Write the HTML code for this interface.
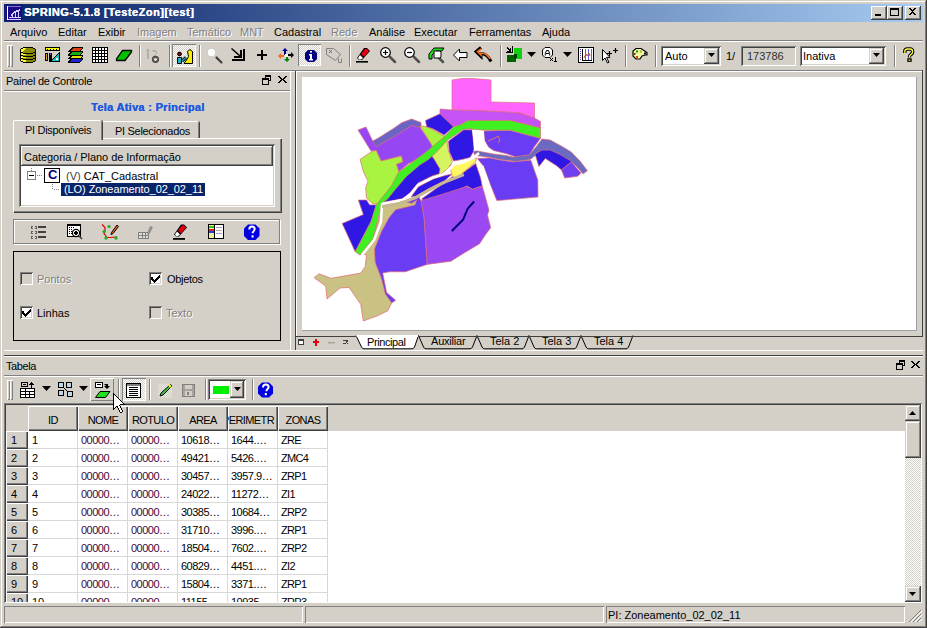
<!DOCTYPE html>
<html><head><meta charset="utf-8">
<style>
*{margin:0;padding:0;box-sizing:border-box}
html,body{width:927px;height:628px;overflow:hidden;background:#d4d0c8;font-family:"Liberation Sans",sans-serif;font-size:11px;color:#000}
.a{position:absolute}
svg{display:block}
.t{position:absolute;white-space:pre;line-height:13px}
.hl{position:absolute;height:1px}
.vl{position:absolute;width:1px}
.dis{color:#808080;text-shadow:1px 1px 0 #fff}
.btn{position:absolute;background:#d4d0c8;box-shadow:inset -1px -1px #404040,inset 1px 1px #fff,inset -2px -2px #808080}
.chk{background:#fff;background-image:conic-gradient(#d4d0c8 25%,#fff 0 50%,#d4d0c8 0 75%,#fff 0);background-size:2px 2px;box-shadow:inset 1px 1px #808080,inset -1px -1px #fff}
.cb{width:13px;height:13px;box-shadow:inset 1px 1px #808080,inset -1px -1px #fff,inset 2px 2px #404040,inset -2px -2px #d4d0c8}
.sunk{position:absolute;box-shadow:inset 1px 1px #808080,inset -1px -1px #fff,inset 2px 2px #404040,inset -2px -2px #d4d0c8}
</style></head><body>
<!-- window frame -->
<div class="hl" style="left:0;top:1px;width:926px;background:#fff"></div>
<div class="vl" style="left:1px;top:1px;height:626px;background:#fff"></div>
<div class="vl" style="left:925px;top:1px;height:626px;background:#808080"></div>
<div class="vl" style="left:926px;top:0;height:628px;background:#404040"></div>
<div class="hl" style="left:1px;top:626px;width:925px;background:#808080"></div>
<div class="hl" style="left:0;top:627px;width:927px;background:#404040"></div>

<!-- title bar -->
<div class="a" style="left:4px;top:4px;width:919px;height:18px;background:linear-gradient(to right,#0a246a,#a6caf0)"></div>
<div class="t" style="left:24px;top:6px;color:#fff;font-weight:bold;font-size:11px;letter-spacing:0.5px;text-shadow:0.4px 0 #fff">SPRING-5.1.8 [TesteZon][test]</div>
<div class="btn" style="left:871px;top:6px;width:16px;height:14px"></div>
<div class="btn" style="left:887px;top:6px;width:16px;height:14px"></div>
<div class="btn" style="left:905px;top:6px;width:16px;height:14px"></div>
<svg class="a" style="left:0;top:0" width="927" height="22" shape-rendering="crispEdges">
<rect x="875" y="14" width="6" height="2" fill="#000"/>
<path d="M890 8h9v8h-9zM891 10v5h7v-5z" fill="#000"/>
<path d="M909 8h2v1h1v1h1v-1h1v-1h2v1h-1v1h-1v1h-1v1h1v1h1v1h1v1h-2v-1h-1v-1h-1v1h-1v1h-2v-1h1v-1h1v-1h1v-1h-1v-1h-1v-1h-1z" fill="#000"/>
<!-- app icon -->
<rect x="6" y="5" width="16" height="16" fill="#1a0a8a"/>
<rect x="7" y="6" width="1" height="14" fill="#fff"/><rect x="7" y="6" width="14" height="1" fill="#e0e0ff" opacity="0.5"/>
<path d="M10 15l5-4 5-2v2l-5 2-4 3z M9 17h12v1H9z M8 19h13v1H8z M12 13h1v4h-1zM15 12h1v5h-1zM18 11h1v6h-1z" fill="#d8d0ff"/>
</svg>

<!-- menu -->
<div class="t" style="left:10px;top:26px">Arquivo</div>
<div class="t" style="left:58px;top:26px">Editar</div>
<div class="t" style="left:98px;top:26px">Exibir</div>
<div class="t dis" style="left:137px;top:26px">Imagem</div>
<div class="t dis" style="left:187px;top:26px">Temático</div>
<div class="t dis" style="left:240px;top:26px">MNT</div>
<div class="t" style="left:274px;top:26px">Cadastral</div>
<div class="t dis" style="left:331px;top:26px">Rede</div>
<div class="t" style="left:369px;top:26px">Análise</div>
<div class="t" style="left:414px;top:26px">Executar</div>
<div class="t" style="left:469px;top:26px">Ferramentas</div>
<div class="t" style="left:542px;top:26px">Ajuda</div>
<div class="hl" style="left:4px;top:40px;width:919px;background:#808080"></div>
<div class="hl" style="left:4px;top:41px;width:919px;background:#fff"></div>


<!-- toolbar -->
<div class="a" style="left:7px;top:45px;width:3px;height:22px;box-shadow:inset 1px 1px #fff,inset -1px -1px #808080"></div>
<div class="a" style="left:10px;top:45px;width:3px;height:22px;box-shadow:inset 1px 1px #fff,inset -1px -1px #808080"></div>
<div class="a chk" style="left:172px;top:44px;width:24px;height:23px"></div>
<div class="a chk" style="left:298px;top:44px;width:23px;height:22px"></div>
<svg class="a" style="left:0;top:0" width="927" height="72" shape-rendering="crispEdges">
<g fill="#808080">
<rect x="139" y="45" width="1" height="22"/><rect x="169" y="45" width="1" height="22"/><rect x="199" y="45" width="1" height="22"/>
<rect x="349" y="45" width="1" height="22"/><rect x="500" y="45" width="1" height="22"/><rect x="625" y="45" width="1" height="22"/>
<rect x="655" y="45" width="1" height="22"/><rect x="894" y="45" width="1" height="22"/>
</g>
<g fill="#fff">
<rect x="140" y="45" width="1" height="22"/><rect x="170" y="45" width="1" height="22"/><rect x="200" y="45" width="1" height="22"/>
<rect x="350" y="45" width="1" height="22"/><rect x="501" y="45" width="1" height="22"/><rect x="626" y="45" width="1" height="22"/>
<rect x="656" y="45" width="1" height="22"/><rect x="895" y="45" width="1" height="22"/>
</g>
<!-- database -->
<g transform="translate(20,47)">
<path d="M3 0h10v1h2v1h1v12h-1v1h-2v1H3v-1H1v-1H0V2h1V1h2z" fill="#000"/>
<path d="M3 1h10v1h2v12h-2v1H3v-1H1V2h2z" fill="#8a8a00"/>
<path d="M3 1h3v1H5v1H4v1H3v1H2v1H1V2h2z M1 6h5v2H1z M1 9h5v2H1z M1 12h5v2H1z M3 14h3v1H3z" fill="#ffff30"/><path d="M1 6h2v1H1zM1 9h2v1H1zM1 12h2v1H1z" fill="#e8e820"/>
<path d="M1 5h2v1h10v-1h2v1h-2v1H3V6H1z M1 8h2v1h10v-1h2v1h-2v1H3V9H1z M1 11h2v1h10v-1h2v1h-2v1H3v-1H1z" fill="#000"/>
</g>
<!-- ruler/triangle -->
<g transform="translate(45,47)">
<rect x="0" y="0" width="15" height="4" fill="#000"/><rect x="1" y="1" width="13" height="2" fill="#ffff00"/>
<path d="M2 2h1v1H2zM5 2h1v1H5zM8 2h1v1H8zM11 2h1v1h-1z" fill="#000"/>
<rect x="0" y="6" width="3" height="8" fill="#000"/><rect x="1" y="7" width="1" height="6" fill="#e0a040"/>
<rect x="4" y="6" width="3" height="9" fill="#000"/><rect x="5" y="6" width="1" height="2" fill="#6040a0"/>
<path d="M15 4v11H5z" fill="#000"/><path d="M14 6v8H7z" fill="#20c0c0"/><rect x="11" y="11" width="2" height="2" fill="#fff"/>
</g>
<!-- layers -->
<g transform="translate(68,47)">
<path d="M4 0h11v1l-3 4H0v-1z" fill="#000"/><path d="M5 1h9l-2 3H2z" fill="#e04010"/>
<path d="M3 4h12v1l-3 4H0v-1z" fill="#000"/><path d="M4 5h10l-2 3H2z" fill="#10b010"/>
<path d="M3 8h12v1l-3 3H0v-1z" fill="#000"/><path d="M4 9h10l-2 2H2z" fill="#e0e000"/>
<path d="M3 11h12v1l-3 4H0v-1z" fill="#000"/><path d="M4 12h10l-2 3H2z" fill="#2020d0"/>
</g>
<!-- grid -->
<g transform="translate(92,47)">
<rect width="16" height="16" fill="#000"/>
<path d="M1 1h2v2H1zM4 1h2v2H4zM7 1h2v2H7zM10 1h2v2h-2zM13 1h2v2h-2zM1 4h2v2H1zM4 4h2v2H4zM7 4h2v2H7zM10 4h2v2h-2zM13 4h2v2h-2zM1 7h2v2H1zM4 7h2v2H4zM7 7h2v2H7zM10 7h2v2h-2zM13 7h2v2h-2zM1 10h2v2H1zM4 10h2v2H4zM7 10h2v2H7zM10 10h2v2h-2zM13 10h2v2h-2zM1 13h2v2H1zM4 13h2v2H4zM7 13h2v2H7zM10 13h2v2h-2zM13 13h2v2h-2z" fill="#fff"/>
</g>
<!-- parallelogram -->
<path d="M122.5 50.5h9v1.5l-6.5 8.5h-8.5v-1.5z" fill="#00c000" stroke="#000" stroke-width="1.3" shape-rendering="geometricPrecision"/>
<!-- disabled 12 -->
<g fill="#b4b0a8">
<rect x="147" y="49" width="2" height="10"/><rect x="146" y="50" width="1" height="1"/>
<path d="M152 50h4v1h1v3h-1v1h-1v1h-1v1h-1v1h4v1h-5v-2h1v-1h1v-1h1v-1h1v-2h-3z"/>
</g>
<circle cx="155.5" cy="59.3" r="2.6" fill="none" stroke="#504c48" stroke-width="2" shape-rendering="geometricPrecision"/>
<path d="M154 58.5l1.5 2 1.5-2" fill="none" stroke="#fff" stroke-width="1" shape-rendering="geometricPrecision"/>
<!-- person/wall -->
<g shape-rendering="geometricPrecision" stroke="#000" stroke-width="1">
<path d="M187.5 51.5l2.5-2 2.5 2v12h-8.5l2.5-3.5 2-3.5z" fill="#f8f000"/>
<path d="M182 61l4-3.5" stroke="#000" stroke-width="3"/>
<path d="M182 61l4-3.5" stroke="#20b0c8" stroke-width="1.3"/>
<path d="M177.5 57.5h4v6h-4z" fill="#20b0c8"/>
<circle cx="179.5" cy="54" r="1.9" fill="#900000"/>
</g>
<!-- magnifier -->
<g shape-rendering="geometricPrecision">
<circle cx="211.5" cy="52.5" r="4.3" fill="#fff" stroke="#c8c8c8" stroke-width="1"/>
<path d="M216.5 57.5l5 5" stroke="#404040" stroke-width="2.2" stroke-linecap="round"/>
</g>
<!-- bottom-right arrow -->
<g fill="#000">
<path d="M232 48l8 7v-5h2v8h-8v-2h5l-8-7z" shape-rendering="geometricPrecision"/>
<rect x="243" y="49" width="2" height="12"/><rect x="232" y="59" width="13" height="2"/>
</g>
<!-- plus -->
<rect x="261" y="50" width="2" height="10" fill="#000"/><rect x="257" y="54" width="10" height="2" fill="#000"/>
<!-- move arrows -->
<g shape-rendering="geometricPrecision">
<path d="M285 48l3 3h-2v4h-2v-4h-2z" fill="#000080"/>
<path d="M294 55l-3 3v-2h-3v-2h3v-2z" fill="#000"/>
<path d="M287 62l-3-3h2v-3h2v3h2z" fill="#008000"/>
<path d="M278 56l3-3v2h3v2h-3v2z" fill="#f07020"/>
<rect x="285" y="54" width="3" height="3" fill="#fff"/>
</g>
<!-- info -->
<g shape-rendering="geometricPrecision">
<path d="M308 50h6l3 3v6l-3 3h-6l-3-3v-6z" fill="#000080"/>
<rect x="310" y="51" width="2" height="1.6" fill="#fff"/>
<path d="M309 54h3v5h1v1.5h-4V59h1v-3.5h-1z" fill="#fff"/>
</g>
<!-- disabled tag -->
<g shape-rendering="geometricPrecision" fill="none" stroke="#808080" stroke-width="1">
<path d="M326.5 48.5h7l7 6-5 6-9-6z"/><path d="M338.5 58.5v4h3v-4"/>
<path d="M329 50l3 3M332 50l-3 3" stroke="#707070"/>
</g>
<!-- eraser -->
<g shape-rendering="geometricPrecision">
<path d="M364 48l3 0 3 3-8 9h-3l-2-2z" fill="#000"/>
<path d="M365 49h2l2 2-5 6-3-3z" fill="#e00010"/>
<path d="M360 55l3 3-2 1.5h-2l-1-1.5z" fill="#fff"/>
<rect x="356" y="61" width="12" height="1.6" fill="#000"/>
</g>
<!-- zoom+ -->
<g shape-rendering="geometricPrecision">
<path d="M390 57l5 5" stroke="#505050" stroke-width="2.5" stroke-linecap="round"/>
<circle cx="385.5" cy="52.5" r="4.8" fill="#fff" stroke="#000" stroke-width="1.2"/>
<path d="M383 52.5h5M385.5 50v5" stroke="#000" stroke-width="1.2"/>
</g>
<!-- zoom- -->
<g shape-rendering="geometricPrecision">
<path d="M414 57l5 5" stroke="#505050" stroke-width="2.5" stroke-linecap="round"/>
<circle cx="409.5" cy="52.5" r="4.8" fill="#fff" stroke="#000" stroke-width="1.2"/>
<path d="M407 52.5h5" stroke="#000" stroke-width="1.2"/>
</g>
<!-- green zoom -->
<g shape-rendering="geometricPrecision">
<path d="M434 48h10l-2 3h-6l-4 4v4h-3v-5z" fill="#20e020" stroke="#000" stroke-width="1"/>
<path d="M439 58l4 4" stroke="#505050" stroke-width="2.5" stroke-linecap="round"/>
<path d="M434 51h6l1 1v5l-1 1h-6z" fill="#fff" stroke="#000" stroke-width="1"/>
</g>
<!-- left arrow -->
<path d="M453.5 55l6-6v3.5h7.5v5h-7.5v3.5z" fill="#fff" stroke="#000" stroke-width="1" shape-rendering="geometricPrecision"/>
<!-- undo -->
<g shape-rendering="geometricPrecision">
<path d="M481 47.5l-5 4 5 5v-3c4 0 7 2 10 8" fill="none" stroke="#000" stroke-width="3"/>
<path d="M481 49l-3.5 2.5 3.5 3.5v-2c4 0 7 2 9 6" fill="none" stroke="#f07020" stroke-width="1.6"/>
</g>
<!-- green squares -->
<g>
<rect x="514" y="48" width="8" height="11" fill="#10d010"/>
<rect x="507" y="55" width="9" height="7" fill="#006000"/>
<rect x="514" y="54" width="3" height="4" fill="#004000"/>
<path d="M507 47l3 3v-2h1v4h-4v-1h2l-3-3z M506 52h6v-6h1v7h-7z" fill="#000"/>
</g>
<path d="M527 52h9l-4.5 5z" fill="#000" shape-rendering="geometricPrecision"/>
<!-- A x1 -->
<g shape-rendering="geometricPrecision">
<path d="M545 47.5h5l2.5 2.5v5l-2.5 2.5h-5l-2.5-2.5v-5z" fill="#fff" stroke="#000" stroke-width="1"/>
<path d="M545.3 55.5v-2l1.2-3h2l1.2 3v2M546 53.5h3" fill="none" stroke="#000" stroke-width="1"/>
</g>
<g shape-rendering="crispEdges" fill="#000">
<path d="M550 58h1v1h1v-1h1v1h-1v1h1v1h-1v-1h-1v1h-1v-1h1v-1h-1z"/>
<path d="M555 57h1v4h1v1h-3v-1h1v-3h-1z"/>
</g>
<path d="M563 52h9l-4.5 5z" fill="#000" shape-rendering="geometricPrecision"/>
<!-- chart -->
<g>
<rect x="578" y="47" width="16" height="16" fill="#000"/><rect x="579" y="48" width="14" height="14" fill="#fff"/>
<rect x="582" y="49" width="1" height="12" fill="#000"/><rect x="582" y="60" width="10" height="1" fill="#000"/>
<path d="M580 49h1v1h-1zM580 51h1v1h-1zM580 53h1v1h-1zM580 55h1v1h-1zM580 57h1v1h-1zM580 59h1v1h-1z" fill="#6040c0"/>
<rect x="585" y="49" width="1" height="11" fill="#6060e0"/><rect x="588" y="49" width="1" height="11" fill="#6060e0"/><rect x="591" y="49" width="1" height="11" fill="#6060e0"/>
<path d="M584 58l2-4 1 2 2-3 1 3" fill="none" stroke="#c05030" stroke-width="1" shape-rendering="geometricPrecision"/>
</g>
<!-- cursor plus -->
<g shape-rendering="geometricPrecision">
<path d="M602.5 49.5v11l2.5-2.5 2.5 5 1.5-.8-2.5-4.8h3.5z" fill="#fff" stroke="#000" stroke-width="1"/>
<path d="M607 53.5h5M609.5 51v5M613 50.5h5M615.5 48v5" stroke="#000" stroke-width="1.2"/>
</g>
<!-- palette -->
<g shape-rendering="geometricPrecision">
<path d="M636 48.5h5l3 2 3 2v2.5h-2l-3 1-2 3h-4l-3-3v-5z" fill="#f0f8a0" stroke="#000" stroke-width="1.2"/>
<rect x="636" y="50.5" width="2" height="2" fill="#00a000"/><rect x="640" y="50.5" width="2" height="2" fill="#b0b020"/>
<rect x="633.5" y="53" width="2" height="2" fill="#803000"/><rect x="636" y="56" width="2" height="2" fill="#e04000"/>
<rect x="644" y="52.5" width="2" height="2" fill="#000040"/>
</g>
<!-- help -->
<g shape-rendering="geometricPrecision" fill="none" stroke-linejoin="round">
<path d="M904.8,53 V51.5 Q904.8,49 907.5,49 H910 Q912.6,49 912.6,51.8 Q912.6,53.8 910.5,54.8 Q909.5,55.3 909.5,57 V57.5" stroke="#000" stroke-width="3.4"/>
<rect x="907.3" y="58.3" width="4.4" height="3.6" fill="#000" stroke="none"/>
<path d="M904.8,53 V51.5 Q904.8,49 907.5,49 H910 Q912.6,49 912.6,51.8 Q912.6,53.8 910.5,54.8 Q909.5,55.3 909.5,57 V57.5" stroke="#ffff40" stroke-width="1.3"/>
<rect x="908.6" y="59.6" width="1.8" height="1.2" fill="#ffff40" stroke="none"/>
</g>
</svg>
<!-- combos -->
<div class="sunk" style="left:661px;top:46px;width:60px;height:20px;background:#fff"></div>
<div class="btn" style="left:704px;top:48px;width:15px;height:16px;box-shadow:inset -1px -1px #404040,inset 1px 1px #d4d0c8,inset -2px -2px #808080,inset 2px 2px #fff"></div>
<svg class="a" style="left:708px;top:53px" width="8" height="5"><path d="M0 0h7l-3.5 4z" fill="#000"/></svg>
<div class="t" style="left:665px;top:50px">Auto</div>
<div class="t" style="left:726px;top:50px">1/</div>
<div class="sunk" style="left:741px;top:46px;width:55px;height:20px;background:#d4d0c8"></div>
<div class="t" style="left:747px;top:50px;color:#303030">173786</div>
<div class="sunk" style="left:800px;top:46px;width:86px;height:20px;background:#fff"></div>
<div class="btn" style="left:869px;top:48px;width:15px;height:16px;box-shadow:inset -1px -1px #404040,inset 1px 1px #d4d0c8,inset -2px -2px #808080,inset 2px 2px #fff"></div>
<svg class="a" style="left:873px;top:53px" width="8" height="5"><path d="M0 0h7l-3.5 4z" fill="#000"/></svg>
<div class="t" style="left:803px;top:50px">Inativa</div>

<!-- toolbar bottom -->
<div class="hl" style="left:4px;top:70px;width:919px;background:#808080"></div>
<div class="hl" style="left:4px;top:71px;width:919px;background:#fff"></div>

<!-- left dock -->
<div class="t" style="left:6px;top:75px;letter-spacing:-0.25px">Painel de Controle</div>
<div class="hl" style="left:4px;top:90px;width:287px;background:#808080"></div>
<div class="hl" style="left:4px;top:91px;width:287px;background:#fff"></div>
<div class="vl" style="left:290px;top:71px;height:279px;background:#fff"></div>


<div class="a" style="left:278px;top:76px;width:9px;height:8px"><svg width="9" height="8" shape-rendering="crispEdges"><path d="M0 0h2v1h1v1h1v1h1v-1h1v-1h1v-1h2v1h-1v1h-1v1h-1v1h1v1h1v1h1v1h-2v-1h-1v-1h-1v-1h-1v1h-1v1h-1v1H0v-1h1v-1h1v-1h1v-1H2v-1H1V1H0z" fill="#000"/></svg></div>
<svg class="a" style="left:262px;top:75px" width="10" height="10" shape-rendering="crispEdges"><path d="M3 0h6v6H7v-1h1V2H4v1H3z" fill="#000"/><path d="M0 3h7v7H0z M1 5v4h5V5z" fill="#000"/></svg>
<div class="t" style="left:91px;top:101px;color:#2058e0;font-weight:bold;letter-spacing:0.3px;text-shadow:0.3px 0 #2058e0">Tela Ativa : Principal</div>
<!-- tabs -->
<div class="a" style="left:102px;top:121px;width:97px;height:17px;border-top:1px solid #fff;border-left:1px solid #fff;border-radius:2px 2px 0 0;box-shadow:inset -1px 0 #808080,1px 0 #404040"></div>
<div class="t" style="left:115px;top:125px;letter-spacing:-0.3px">PI Selecionados</div>
<div class="a" style="left:13px;top:138px;width:268px;height:74px;border-top:1px solid #fff;border-left:1px solid #fff;box-shadow:inset -1px -1px #808080,1px 1px #404040"></div>
<div class="a" style="left:13px;top:120px;width:89px;height:20px;background:#d4d0c8;border-top:1px solid #fff;border-left:1px solid #fff;border-radius:2px 2px 0 0;box-shadow:inset -1px 0 #808080,1px 0 #404040"></div>
<div class="t" style="left:25px;top:124px;letter-spacing:-0.3px">PI Disponíveis</div>
<!-- listview -->
<div class="sunk" style="left:19px;top:144px;width:256px;height:63px;background:#fff"></div>
<div class="btn" style="left:21px;top:146px;width:252px;height:20px"></div>
<div class="t" style="left:24px;top:151px;letter-spacing:-0.05px">Categoria / Plano de Informação</div>
<svg class="a" style="left:26px;top:167px" width="40" height="30" shape-rendering="crispEdges">
<rect x="1" y="4" width="9" height="9" fill="#808080"/><rect x="2" y="5" width="7" height="7" fill="#fff"/><rect x="3" y="8" width="5" height="1" fill="#000"/>
<path d="M5 1h1v1H5zM5 3h1v1H5zM11 8h1v1h-1zM13 8h1v1h-1zM15 8h1v1h-1z" fill="#808080"/>
<path d="M26 17h1v1h-1zM26 19h1v1h-1zM26 21h1v1h-1zM28 22h1v1h-1zM30 22h1v1h-1zM32 22h1v1h-1z" fill="#808080"/>
<rect x="18" y="1" width="16" height="15" fill="#000"/><rect x="19" y="2" width="14" height="13" fill="#fff"/>
</svg>
<div class="t" style="left:48px;top:168px;font-weight:bold;color:#000080;font-size:13px">C</div>
<div class="t" style="left:66px;top:170px;color:#000"><span style="color:#404040">(V)</span> CAT_Cadastral</div>
<div class="a" style="left:61px;top:183px;width:144px;height:13px;background:#0a246a"></div>
<div class="t" style="left:64px;top:183px;color:#fff;letter-spacing:-0.08px">(LO) Zoneamento_02_02_11</div>
<!-- tool strip -->
<div class="a" style="left:13px;top:219px;width:267px;height:25px;border:1px solid #808080;box-shadow:inset 1px 1px #fff,1px 1px #fff"></div>
<svg class="a" style="left:0;top:218px" width="290" height="26" shape-rendering="crispEdges">
<!-- list -->
<g fill="#606060"><path d="M31 8h2v1h-1v1h1v1h-2zM35 8h2v3h-2v-1h1V9h-1zM31 13h2v1h-1v1h1v1h-2zM35 13h2v3h-2v-1h1v-1h-1zM31 18h2v1h-1v1h1v1h-2zM35 18h2v3h-2v-1h1v-1h-1z"/></g>
<g fill="#404040"><rect x="38" y="8" width="8" height="2"/><rect x="38" y="13" width="8" height="2"/><rect x="38" y="18" width="8" height="2"/></g>
<!-- table zoom -->
<g>
<rect x="67" y="6" width="14" height="13" fill="#000"/><rect x="68" y="8" width="12" height="10" fill="#fff"/>
<path d="M69 9h1v1h-1zM71 9h1v1h-1zM73 9h1v1h-1zM69 11h1v1h-1zM71 11h1v1h-1zM69 13h1v1h-1zM71 13h1v1h-1zM69 15h1v1h-1zM71 15h1v1h-1z" fill="#000"/>
<circle cx="76" cy="15" r="3.6" fill="#fff" stroke="#000" stroke-width="1.2" shape-rendering="geometricPrecision"/>
<path d="M74 15h4M76 13v4" stroke="#000" stroke-width="1.2"/>
<path d="M79 18l3 3" stroke="#404040" stroke-width="1.6" shape-rendering="geometricPrecision"/>
</g>
<!-- edit vector -->
<g shape-rendering="geometricPrecision">
<path d="M102 6.5l3 3 0 4 -1 2 3 4 3 0 7-.5" fill="none" stroke="#e00000" stroke-width="1.2"/>
<circle cx="109" cy="8.5" r="1.6" fill="#20b020"/><circle cx="104" cy="13.5" r="1.6" fill="#20b020"/><circle cx="106" cy="20" r="1.7" fill="#20b020"/><circle cx="116" cy="20" r="1.7" fill="#20b020"/>
<path d="M117 7l1.5 1.5-5.5 7-2 1 .5-2z" fill="#f06010" stroke="#000" stroke-width="1"/>
</g>
<!-- grid edit disabled -->
<g>
<path d="M138 14h11v7h-11z" fill="#808080"/>
<path d="M139 15h3v2h-3zM143 15h2v2h-2zM146 15h2v2h-2zM139 18h3v2h-3zM143 18h2v2h-2zM146 18h2v2h-2z" fill="#e0ded8"/>
<path d="M150 8l3 1-4 8-2-1z" fill="#909090" shape-rendering="geometricPrecision"/>
</g>
<!-- eraser -->
<g shape-rendering="geometricPrecision">
<path d="M181 6.5h3l3 3-8 9h-3l-2-2z" fill="#000"/>
<path d="M182 7.5h2l2 2-5 6-3-3z" fill="#e00010"/>
<path d="M177 13.5l3 3-2 1.5h-2l-1-1.5z" fill="#fff"/>
<rect x="173" y="20" width="12" height="1.8" fill="#000"/>
</g>
<!-- legend -->
<g>
<rect x="208" y="6" width="16" height="15" fill="#000"/>
<rect x="209" y="7" width="5" height="13" fill="#f0f0a0"/><rect x="215" y="7" width="8" height="13" fill="#fff"/>
<rect x="209" y="8" width="5" height="2" fill="#30c030"/><rect x="209" y="11" width="5" height="2" fill="#e02020"/><rect x="209" y="13" width="5" height="2" fill="#2040e0"/>
<rect x="216" y="9" width="6" height="1" fill="#a0a0c0"/><rect x="216" y="12" width="6" height="1" fill="#c0a0c0"/><rect x="216" y="15" width="6" height="1" fill="#a0a0c0"/>
</g>
<!-- help -->
<g shape-rendering="geometricPrecision">
<path d="M248 6.5h7.5l4 4v7.5l-4 4h-7.5l-4-4v-7.5z" fill="#0000e0"/>
<path d="M249.3 11.5c0-2 1.2-3 2.7-3s2.7 1 2.7 2.6c0 2-2.1 2-2.1 4.2M252.6 17.3v2.2" fill="none" stroke="#fff" stroke-width="2"/>
</g>
</svg>
<!-- checkbox group -->
<div class="a" style="left:13px;top:251px;width:268px;height:90px;border:1px solid #000"></div>
<div class="a cb" style="left:20px;top:272px"></div>
<div class="t dis" style="left:37px;top:273px">Pontos</div>
<div class="a cb" style="left:149px;top:272px;background:#fff"></div>
<div class="t" style="left:167px;top:273px;letter-spacing:-0.3px">Objetos</div>
<div class="a cb" style="left:20px;top:306px;background:#fff"></div>
<div class="t" style="left:37px;top:307px">Linhas</div>
<div class="a cb" style="left:149px;top:306px"></div>
<div class="t dis" style="left:166px;top:307px">Texto</div>
<svg class="a" style="left:0;top:0" width="300" height="350" shape-rendering="crispEdges">
<path d="M152 277h1v2h1v1h1v-1h1v-1h1v-1h1v-1h1v-1h1v3h-1v1h-1v1h-1v1h-1v1h-1v1h-1v-1h-1v-1h-1v-1h-1v-3z" fill="#000"/>
<path d="M23 311h1v2h1v1h1v-1h1v-1h1v-1h1v-1h1v-1h1v3h-1v1h-1v1h-1v1h-1v1h-1v1h-1v-1h-1v-1h-1v-1h-1v-3z" fill="#000"/>
</svg>

<!-- map dock -->
<div class="vl" style="left:295px;top:70px;height:280px;background:#404040"></div>
<div class="hl" style="left:295px;top:70px;width:628px;background:#808080"></div>
<div class="vl" style="left:296px;top:71px;height:265px;background:#fff"></div>
<div class="hl" style="left:296px;top:71px;width:626px;background:#fff"></div>
<div class="vl" style="left:922px;top:70px;height:267px;background:#404040"></div>
<div class="hl" style="left:295px;top:336px;width:628px;background:#404040"></div>
<div class="a" style="left:302px;top:77px;width:614px;height:253px;background:#fff"></div>
<div class="vl" style="left:916px;top:77px;height:254px;background:#a0a0a0"></div>
<div class="hl" style="left:302px;top:330px;width:615px;background:#a0a0a0"></div>

<!-- MAP -->
<svg class="a" style="left:302px;top:77px" width="614" height="253">
<g transform="translate(-302,-77)" stroke="#e06a78" stroke-width="0.7" stroke-linejoin="round">
<path fill="#ff64ff" d="M452,80 462,78.5 473,78.5 491,80 491,102 534.5,103 534.5,118 520,113 500,111.7 475,110.5 452,110z"/>
<path fill="#c452f4" d="M440,109 452,110 475,110.5 500,111.7 520,113 534.5,118 540.5,121.5 540.5,128 525,124 509.7,120.5 467.7,120.5 461,124.6 453.5,126.7 440,113.8z"/>
<path fill="#6c64c4" d="M371,142 380,137 393.5,128.4 402,122.6 411.7,119 421,122.6 421,128 411.7,126 393.5,137.5 376.3,147z"/>
<path fill="#9646f2" d="M358,130 366,127 373.5,142.7 376.3,146.5 393.5,137 411.7,125.5 420,127.4 431.3,144 433,149 423,157 408.6,163.4 398.8,171.5 396.4,164.2 402.9,161.8 401.3,156.1 381,161 376.2,150.5 371,151z"/>
<path fill="#a8f440" d="M360,159.4 372.2,151.3 376.2,150.5 381,161 401.3,156.1 402.9,161.8 396.4,164.2 398.8,172 405,168 400,180 390,192 381,200 377,203.9 373,203.9 366.5,198.2 365.7,187.7 368,181.2 363.3,171.5z"/>
<path fill="#a8f440" d="M420,126 427.5,126.8 436,131.5 444.7,136.3 440,143 433,150 431.3,144z"/>
<path fill="#3018e4" d="M425.5,120.5 440,113.8 453.5,126.7 444.2,135 436.9,130.9 432.8,128.8 426.6,126.7z"/>
<path fill="#d4f460" d="M431,155 447,140.5 448.3,150 452.3,161.8 449,167.5 445,171 438,176 433,176z"/>
<path fill="#3018e4" d="M448.3,141.2 463.8,129.8 472.1,129.8 473.1,138.1 474.2,150.5 470,157.5 462,159.5 453.5,161 449.3,151.6z"/>
<path fill="#6a3cf4" d="M483.8,131 509.7,130.2 540.5,138.3 534,147.2 529.1,155.3 516.2,157 506.5,153.7 493.5,150.5 488.7,147.2 484.5,140z"/>
<path fill="none" stroke="#e87070" stroke-width="1" d="M488,141 495,138 498,136 500,140 498,143"/>
<path fill="#6a3cf4" d="M477.4,158.5 490,158 500,160 513,161.8 530.8,160.2 537.8,180 538,197 496.8,200.6 490.3,184.4 483.8,166.6z"/>
<path fill="#6a6ac0" d="M473,150 480,151.5 493.5,154 506,155.5 513,157 529,155 536,147 542,139 550.2,140 563,147 571.2,152 580,161 587.4,170.7 583,174 578,168 571.2,161.8 560,155 550.2,150.5 542,150.5 536,155 530,159.5 516,161.5 500,159.5 490,157.5 480,156 475,156z"/>
<path fill="#3018e4" d="M535,154 542,150 550.2,150 560,154.5 572,161.5 561.5,169.9 556.6,165.8 545.3,158.5 538.9,166.6z"/>
<path fill="#7040f0" d="M561.5,170 571.2,161.8 581,173 577.7,176.3 564.7,178z"/>
<path fill="#3018e4" d="M384,202 393,200.5 402.6,198.5 410.3,192.6 418,183 433.2,175.4 439,174 440,169 434,159 431,155 420,160 400,175z"/>
<path fill="#3018e4" d="M421.8,198.8 434,190 445.5,181.6 452,177 464,172 475.7,163.4 480.6,178 482.2,186 472.5,189.3 467,186 426,205.3z"/>
<path fill="#9a48f2" d="M420.7,200.7 440,195 466.8,186.4 472.5,189.3 482.2,186 484,192 489,210.2 487.5,215 490.7,227.7 486,234 479.6,243.7 463.7,253.2 451,261.2 427,264.4 424,218z"/>
<path fill="#6a3cf4" d="M381,206 398,203 419,197 421,201 424,218 427,264.4 405.3,271.8 389.1,271.8 382.7,273.1 386.6,292.5 395.6,300.3 391.7,303 382,294 376,270 374,250 381,232 381,215z"/>
<path fill="#3018e4" d="M411,197 418,187 433,179 445,175.5 452,174 444.7,180.7 429.4,188.3 416,196z"/>
<path fill="#fff860" d="M449.8,165.5 458,163.5 465,162 470.6,159.5 476.5,158 475.8,161.7 463.9,171.9 456.3,178.3 452,176.2z"/>
<path fill="#3018e4" d="M358.4,200 366.5,200 369.7,204.9 376.2,204.9 371.3,221 355.2,251.8 342.2,223.5 363.3,214.6 360,204.9z"/>
<path fill="#cac282" d="M383,203 395.6,201 402,201.6 411.8,203.2 416.7,200 415,205 395.6,209.7 389,217.8 381,232.4 374.6,248.5 375,262 381.4,278.3 385.3,293.8 391.7,302.9 387.8,310.7 377.5,315.8 363.3,321 360.7,304.2 349,287.4 340,288 327,299 325.7,286 314,277.7 319.2,273.8 330.9,278.3 360.7,273.1 365.2,266.7 366.5,255 362,254 373,238.8 378,222z"/>
<path fill="#40f020" d="M355.2,251.8 371.3,221 376.2,205 381,199 392,185 398.7,172 423.6,153.8 443,138 453.5,126.7 461,124.6 467.7,120.5 509.7,120.5 525,124 540.5,128 540.5,138.3 509.7,130.2 483.8,130.2 468,128.8 462.8,129.8 447.3,140.2 437,151.6 428.4,159.6 419.8,165 406.4,176.4 395,189.8 387.3,199.4 382,203 373,238.8 360,255z"/>
<path fill="none" stroke="#fff" stroke-width="2.5" d="M362,255 374,240 381,222 382,204 393,201.8 402.6,200 410.3,194.6 418,185 433.2,177.6 444.7,173.6 454.2,164.5 463.8,162 473.3,158 479,153"/>
<path fill="none" stroke="#c8b890" stroke-width="3" d="M382,206.5 396.9,204.5 416,197.5 429.4,189.8 444.7,182.2 454.2,178.3 463.8,174.5"/>
<path fill="#fff" stroke="none" d="M472.1,130 483.8,131 484.5,140 484.5,146.4 474.2,151.6 473.1,138.1z"/>
<path fill="none" stroke="#fff" stroke-width="2.5" d="M482,166 487,180 491,192 494,202"/>
<path fill="none" stroke="#000080" stroke-width="2" d="M474.1,201.5 467.7,208.6 463,219.8 451.8,231"/>
</g>
</svg>
<!-- tab bar -->
<svg class="a" style="left:290px;top:330px" width="360" height="22" shape-rendering="crispEdges">
<rect x="8" y="9" width="6" height="6" fill="#404040"/><rect x="9" y="11" width="4" height="3" fill="#fff"/>
<rect x="25" y="9" width="2" height="7" fill="#e00010"/><rect x="23" y="11" width="6" height="2" fill="#e00010"/>
<rect x="38" y="12" width="7" height="1" fill="#a8a49c"/><rect x="38" y="13" width="7" height="1" fill="#c0bcb4"/>
<path d="M53 10h5v1h-1v1h-1v-1h-3zM53 13h3v-1h1v-1h1v1h-1v1h1v1h-1v-1h-1v1h-3z" fill="#404040"/>
</svg>
<svg class="a" style="left:350px;top:330px" width="300" height="22" shape-rendering="geometricPrecision">
<g stroke="#000" stroke-width="1" fill="#d4d0c8">
<path d="M68.5 5.5L73.5 17Q74.5 18.8 76 18.8H120Q121.5 18.8 122.5 17L127 5.5"/>
<path d="M127 5.5L132 17Q133 18.8 134.5 18.8H172Q173.5 18.8 174.5 17L179 5.5"/>
<path d="M179 5.5L184 17Q185 18.8 186.5 18.8H224Q225.5 18.8 226.5 17L231 5.5"/>
<path d="M231 5.5L236 17Q237 18.8 238.5 18.8H276Q277.5 18.8 278.5 17L283 5.5"/>
</g>
<path d="M6 5.5L11.5 17Q12.5 18.8 14 18.8H62Q63.5 18.8 64.5 17L68.5 5.5" fill="#fff" stroke="#000" stroke-width="1"/>
<rect x="6.5" y="5" width="61.5" height="2" fill="#fff"/>
</svg>
<div class="hl" style="left:418px;top:336px;width:505px;background:#404040"></div>
<div class="t" style="left:367px;top:336px;color:#000;letter-spacing:-0.4px">Principal</div>
<div class="t" style="left:431px;top:335px;color:#000;letter-spacing:-0.2px">Auxiliar</div>
<div class="t" style="left:490px;top:335px;color:#000">Tela 2</div>
<div class="t" style="left:542px;top:335px;color:#000">Tela 3</div>
<div class="t" style="left:594px;top:335px;color:#000">Tela 4</div>

<!-- splitter -->
<div class="hl" style="left:4px;top:350px;width:919px;background:#fff"></div>
<div class="hl" style="left:4px;top:355px;width:919px;background:#404040"></div>
<div class="hl" style="left:4px;top:356px;width:919px;background:#fff"></div>

<!-- tabela dock -->
<div class="t" style="left:6px;top:360px;letter-spacing:-0.4px">Tabela</div>
<svg class="a" style="left:911px;top:361px" width="9" height="8" shape-rendering="crispEdges"><path d="M0 0h2v1h1v1h1v1h1v-1h1v-1h1v-1h2v1h-1v1h-1v1h-1v1h1v1h1v1h1v1h-2v-1h-1v-1h-1v-1h-1v1h-1v1h-1v1H0v-1h1v-1h1v-1h1v-1H2v-1H1V1H0z" fill="#000"/></svg>
<svg class="a" style="left:896px;top:360px" width="10" height="10" shape-rendering="crispEdges"><path d="M3 0h6v6H7v-1h1V2H4v1H3z" fill="#000"/><path d="M0 3h7v7H0z M1 5v4h5V5z" fill="#000"/></svg>
<div class="hl" style="left:4px;top:375px;width:919px;background:#808080"></div>
<div class="hl" style="left:4px;top:376px;width:919px;background:#fff"></div>

<!-- tabela toolbar -->
<div class="a" style="left:7px;top:380px;width:3px;height:20px;box-shadow:inset 1px 1px #fff,inset -1px -1px #808080"></div>
<div class="a" style="left:10px;top:380px;width:3px;height:20px;box-shadow:inset 1px 1px #fff,inset -1px -1px #808080"></div>
<div class="btn" style="left:90px;top:378px;width:24px;height:23px;box-shadow:inset 1px 1px #fff,inset -1px -1px #808080"></div>
<div class="a chk" style="left:122px;top:378px;width:24px;height:23px"></div>
<div class="a" style="left:158px;top:384px;width:14px;height:14px;background-image:conic-gradient(#d4d0c8 25%,#e8e6e0 0 50%,#d4d0c8 0 75%,#e8e6e0 0);background-size:2px 2px"></div>
<svg class="a" style="left:0;top:374px" width="300" height="32" shape-rendering="crispEdges">
<g fill="#808080"><rect x="118" y="5" width="1" height="21"/><rect x="149" y="5" width="1" height="21"/><rect x="205" y="5" width="1" height="21"/><rect x="252" y="5" width="1" height="21"/></g>
<g fill="#fff"><rect x="119" y="5" width="1" height="21"/><rect x="150" y="5" width="1" height="21"/><rect x="206" y="5" width="1" height="21"/><rect x="253" y="5" width="1" height="21"/></g>
<!-- table icon with arrow -->
<g transform="translate(20,8)">
<rect x="1" y="0" width="7" height="5" fill="#000"/><rect x="2" y="1" width="5" height="3" fill="#d4d0c8"/><rect x="3" y="2" width="3" height="1" fill="#000"/>
<path d="M11 0h1v1h1v1h1v1h-2v3h-1v-3h-2v-1h1v-1h1z" fill="#000"/>
<rect x="0" y="6" width="15" height="10" fill="#000"/>
<path d="M1 7h4v2H1zM6 7h8v2H6zM1 10h4v2H1zM6 10h3v2H6zM10 10h4v2h-4zM1 13h4v2H1zM6 13h3v2H6zM10 13h4v2h-4z" fill="#fff"/>
</g>
<path d="M42 12h9l-4.5 5z" fill="#000" shape-rendering="geometricPrecision"/>
<!-- squares icon -->
<g transform="translate(58,8)" fill="#000">
<path d="M0 0h6v6H0zM1 1v4h4V1z M8 0h6v6H8zM9 1v4h4V1z M0 8h6v6H0zM1 9v4h4V9z M9 9h6v6H9zM10 10v4h4v-4z"/>
<path d="M6 6h1v1h1v1h1v1H8V8H7V7H6z"/>
<rect x="1" y="1" width="4" height="4" fill="#c0d8e8"/><rect x="9" y="1" width="4" height="4" fill="#c0d8e8"/><rect x="1" y="9" width="4" height="4" fill="#c0d8e8"/><rect x="10" y="10" width="4" height="4" fill="#c0d8e8"/>
</g>
<path d="M79 12h9l-4.5 5z" fill="#000" shape-rendering="geometricPrecision"/>
<!-- table-to-poly icon -->
<g transform="translate(95,8)">
<rect x="0" y="0" width="8" height="6" fill="#000"/><rect x="1" y="1" width="6" height="4" fill="#fff"/><rect x="2" y="2" width="4" height="1" fill="#000"/>
<path d="M9 2h4v2h2l-3 3-3-3h2z" fill="#000" shape-rendering="geometricPrecision"/>
<path d="M5 9.5h10l-4.5 6h-10z" fill="#20e020" stroke="#000" stroke-width="1" shape-rendering="geometricPrecision"/>
</g>
<!-- list icon -->
<g transform="translate(126,9)">
<rect width="15" height="15" fill="#000"/><rect x="1" y="1" width="13" height="13" fill="#fff"/><rect x="1" y="1" width="13" height="2" fill="#808080"/>
<rect x="3" y="4" width="9" height="1" fill="#000"/><rect x="3" y="6" width="9" height="1" fill="#000"/><rect x="3" y="8" width="9" height="1" fill="#000"/><rect x="3" y="10" width="9" height="1" fill="#000"/><rect x="3" y="12" width="9" height="1" fill="#000"/>
</g>
<!-- pencil -->
<g shape-rendering="geometricPrecision">
<path d="M170.5 10.5l1.5 1.5-9 9-3 1 1-3z" fill="#40c040" stroke="#000" stroke-width="1"/>
<path d="M169 11l2 2" stroke="#ffff00" stroke-width="2"/>
</g>
<!-- save disabled -->
<g>
<rect x="182" y="10" width="13" height="13" fill="#808080"/><rect x="183" y="11" width="11" height="11" fill="#a8a49c"/>
<rect x="185" y="11" width="7" height="4" fill="#d4d0c8"/><rect x="185" y="17" width="7" height="5" fill="#d4d0c8"/><rect x="187" y="18" width="2" height="3" fill="#808080"/>
</g>
<!-- help -->
<g shape-rendering="geometricPrecision">
<path d="M262 8.5h7l4 4v7l-4 4h-7l-4-4v-7z" fill="#0000e0"/>
<path d="M263 13.5c0-2 1.2-3 2.8-3s2.8 1 2.8 2.6c0 2-2.2 2-2.2 4.2M265.8 19v2.2" fill="none" stroke="#fff" stroke-width="2"/>
</g>
</svg>
<div class="sunk" style="left:208px;top:379px;width:38px;height:21px;background:#fff"></div>
<div class="a" style="left:213px;top:386px;width:16px;height:8px;background:#00ee00"></div>
<div class="btn" style="left:230px;top:381px;width:14px;height:17px;box-shadow:inset -1px -1px #404040,inset 1px 1px #d4d0c8,inset -2px -2px #808080,inset 2px 2px #fff"></div>
<svg class="a" style="left:234px;top:387px" width="8" height="5"><path d="M0 0h7l-3.5 4z" fill="#000"/></svg>
<!-- table -->
<div class="a" style="left:4px;top:403px;width:918px;height:200px;box-shadow:inset 1px 1px #808080,inset -1px -1px #fff,inset 2px 2px #404040,inset -2px -2px #d4d0c8;background:#d4d0c8"></div>
<div class="a" style="left:28px;top:431px;width:877px;height:171px;background:#fff;overflow:hidden">
<div class="vl" style="left:49px;top:0;height:171px;background:#d8d8d8"></div>
<div class="vl" style="left:99px;top:0;height:171px;background:#d8d8d8"></div>
<div class="vl" style="left:149px;top:0;height:171px;background:#d8d8d8"></div>
<div class="vl" style="left:199px;top:0;height:171px;background:#d8d8d8"></div>
<div class="vl" style="left:249px;top:0;height:171px;background:#d8d8d8"></div>
<div class="vl" style="left:299px;top:0;height:171px;background:#d8d8d8"></div>
<div class="hl" style="left:0;top:17px;width:300px;background:#d8d8d8"></div>
<div class="hl" style="left:0;top:35px;width:300px;background:#d8d8d8"></div>
<div class="hl" style="left:0;top:53px;width:300px;background:#d8d8d8"></div>
<div class="hl" style="left:0;top:71px;width:300px;background:#d8d8d8"></div>
<div class="hl" style="left:0;top:89px;width:300px;background:#d8d8d8"></div>
<div class="hl" style="left:0;top:107px;width:300px;background:#d8d8d8"></div>
<div class="hl" style="left:0;top:125px;width:300px;background:#d8d8d8"></div>
<div class="hl" style="left:0;top:143px;width:300px;background:#d8d8d8"></div>
<div class="hl" style="left:0;top:161px;width:300px;background:#d8d8d8"></div>
<div class="hl" style="left:0;top:179px;width:300px;background:#d8d8d8"></div>
<div class="t" style="left:4px;top:3px">1</div>
<div class="t" style="left:53px;top:3px;color:#3c0a3c;letter-spacing:-0.5px">00000…</div>
<div class="t" style="left:103px;top:3px;color:#3c0a3c;letter-spacing:-0.5px">00000…</div>
<div class="t" style="left:153px;top:3px;letter-spacing:-0.5px">10618…</div>
<div class="t" style="left:203px;top:3px;letter-spacing:-0.5px">1644.…</div>
<div class="t" style="letter-spacing:-0.7px;left:253px;top:3px">ZRE</div>
<div class="t" style="left:4px;top:21px">2</div>
<div class="t" style="left:53px;top:21px;color:#3c0a3c;letter-spacing:-0.5px">00000…</div>
<div class="t" style="left:103px;top:21px;color:#3c0a3c;letter-spacing:-0.5px">00000…</div>
<div class="t" style="left:153px;top:21px;letter-spacing:-0.5px">49421…</div>
<div class="t" style="left:203px;top:21px;letter-spacing:-0.5px">5426.…</div>
<div class="t" style="letter-spacing:-0.7px;left:253px;top:21px">ZMC4</div>
<div class="t" style="left:4px;top:39px">3</div>
<div class="t" style="left:53px;top:39px;color:#3c0a3c;letter-spacing:-0.5px">00000…</div>
<div class="t" style="left:103px;top:39px;color:#3c0a3c;letter-spacing:-0.5px">00000…</div>
<div class="t" style="left:153px;top:39px;letter-spacing:-0.5px">30457…</div>
<div class="t" style="left:203px;top:39px;letter-spacing:-0.5px">3957.9…</div>
<div class="t" style="letter-spacing:-0.7px;left:253px;top:39px">ZRP1</div>
<div class="t" style="left:4px;top:57px">4</div>
<div class="t" style="left:53px;top:57px;color:#3c0a3c;letter-spacing:-0.5px">00000…</div>
<div class="t" style="left:103px;top:57px;color:#3c0a3c;letter-spacing:-0.5px">00000…</div>
<div class="t" style="left:153px;top:57px;letter-spacing:-0.5px">24022…</div>
<div class="t" style="left:203px;top:57px;letter-spacing:-0.5px">11272…</div>
<div class="t" style="letter-spacing:-0.7px;left:253px;top:57px">ZI1</div>
<div class="t" style="left:4px;top:75px">5</div>
<div class="t" style="left:53px;top:75px;color:#3c0a3c;letter-spacing:-0.5px">00000…</div>
<div class="t" style="left:103px;top:75px;color:#3c0a3c;letter-spacing:-0.5px">00000…</div>
<div class="t" style="left:153px;top:75px;letter-spacing:-0.5px">30385…</div>
<div class="t" style="left:203px;top:75px;letter-spacing:-0.5px">10684…</div>
<div class="t" style="letter-spacing:-0.7px;left:253px;top:75px">ZRP2</div>
<div class="t" style="left:4px;top:93px">6</div>
<div class="t" style="left:53px;top:93px;color:#3c0a3c;letter-spacing:-0.5px">00000…</div>
<div class="t" style="left:103px;top:93px;color:#3c0a3c;letter-spacing:-0.5px">00000…</div>
<div class="t" style="left:153px;top:93px;letter-spacing:-0.5px">31710…</div>
<div class="t" style="left:203px;top:93px;letter-spacing:-0.5px">3996.…</div>
<div class="t" style="letter-spacing:-0.7px;left:253px;top:93px">ZRP1</div>
<div class="t" style="left:4px;top:111px">7</div>
<div class="t" style="left:53px;top:111px;color:#3c0a3c;letter-spacing:-0.5px">00000…</div>
<div class="t" style="left:103px;top:111px;color:#3c0a3c;letter-spacing:-0.5px">00000…</div>
<div class="t" style="left:153px;top:111px;letter-spacing:-0.5px">18504…</div>
<div class="t" style="left:203px;top:111px;letter-spacing:-0.5px">7602.…</div>
<div class="t" style="letter-spacing:-0.7px;left:253px;top:111px">ZRP2</div>
<div class="t" style="left:4px;top:129px">8</div>
<div class="t" style="left:53px;top:129px;color:#3c0a3c;letter-spacing:-0.5px">00000…</div>
<div class="t" style="left:103px;top:129px;color:#3c0a3c;letter-spacing:-0.5px">00000…</div>
<div class="t" style="left:153px;top:129px;letter-spacing:-0.5px">60829…</div>
<div class="t" style="left:203px;top:129px;letter-spacing:-0.5px">4451.…</div>
<div class="t" style="letter-spacing:-0.7px;left:253px;top:129px">ZI2</div>
<div class="t" style="left:4px;top:147px">9</div>
<div class="t" style="left:53px;top:147px;color:#3c0a3c;letter-spacing:-0.5px">00000…</div>
<div class="t" style="left:103px;top:147px;color:#3c0a3c;letter-spacing:-0.5px">00000…</div>
<div class="t" style="left:153px;top:147px;letter-spacing:-0.5px">15804…</div>
<div class="t" style="left:203px;top:147px;letter-spacing:-0.5px">3371.…</div>
<div class="t" style="letter-spacing:-0.7px;left:253px;top:147px">ZRP1</div>
<div class="t" style="left:4px;top:165px">10</div>
<div class="t" style="left:53px;top:165px;color:#3c0a3c;letter-spacing:-0.5px">00000…</div>
<div class="t" style="left:103px;top:165px;color:#3c0a3c;letter-spacing:-0.5px">00000…</div>
<div class="t" style="left:153px;top:165px;letter-spacing:-0.5px">11155…</div>
<div class="t" style="left:203px;top:165px;letter-spacing:-0.5px">10935…</div>
<div class="t" style="letter-spacing:-0.7px;left:253px;top:165px">ZRP3</div>
</div>
<div class="a" style="left:6px;top:405px;width:899px;height:25px;background:#d4d0c8"></div>
<div class="a" style="left:28px;top:406px;width:50px;height:25px;box-shadow:inset 1px 1px #fff,inset -1px -1px #404040,inset -2px -2px #808080;overflow:hidden"><div class="t" style="left:0;width:50px;top:8px;text-align:center;letter-spacing:-0.6px">ID</div></div>
<div class="a" style="left:78px;top:406px;width:50px;height:25px;box-shadow:inset 1px 1px #fff,inset -1px -1px #404040,inset -2px -2px #808080;overflow:hidden"><div class="t" style="left:0;width:50px;top:8px;text-align:center;letter-spacing:-0.6px">NOME</div></div>
<div class="a" style="left:128px;top:406px;width:50px;height:25px;box-shadow:inset 1px 1px #fff,inset -1px -1px #404040,inset -2px -2px #808080;overflow:hidden"><div class="t" style="left:0;width:50px;top:8px;text-align:center;letter-spacing:-0.6px">ROTULO</div></div>
<div class="a" style="left:178px;top:406px;width:50px;height:25px;box-shadow:inset 1px 1px #fff,inset -1px -1px #404040,inset -2px -2px #808080;overflow:hidden"><div class="t" style="left:0;width:50px;top:8px;text-align:center;letter-spacing:-0.6px">AREA</div></div>
<div class="a" style="left:228px;top:406px;width:50px;height:25px;box-shadow:inset 1px 1px #fff,inset -1px -1px #404040,inset -2px -2px #808080;overflow:hidden"><div class="t" style="right:4px;top:8px;text-align:right;letter-spacing:-0.6px">PERIMETR</div></div>
<div class="a" style="left:278px;top:406px;width:50px;height:25px;box-shadow:inset 1px 1px #fff,inset -1px -1px #404040,inset -2px -2px #808080;overflow:hidden"><div class="t" style="left:0;width:50px;top:8px;text-align:center;letter-spacing:-0.6px">ZONAS</div></div>
<div class="a" style="left:6px;top:431px;width:22px;height:171px;overflow:hidden">
<div class="a" style="left:0;top:0px;width:22px;height:18px;background:#d4d0c8;box-shadow:inset 1px 1px #fff,inset -1px -1px #404040,inset -2px -2px #808080"><div class="t" style="left:5px;top:3px">1</div></div>
<div class="a" style="left:0;top:18px;width:22px;height:18px;background:#d4d0c8;box-shadow:inset 1px 1px #fff,inset -1px -1px #404040,inset -2px -2px #808080"><div class="t" style="left:5px;top:3px">2</div></div>
<div class="a" style="left:0;top:36px;width:22px;height:18px;background:#d4d0c8;box-shadow:inset 1px 1px #fff,inset -1px -1px #404040,inset -2px -2px #808080"><div class="t" style="left:5px;top:3px">3</div></div>
<div class="a" style="left:0;top:54px;width:22px;height:18px;background:#d4d0c8;box-shadow:inset 1px 1px #fff,inset -1px -1px #404040,inset -2px -2px #808080"><div class="t" style="left:5px;top:3px">4</div></div>
<div class="a" style="left:0;top:72px;width:22px;height:18px;background:#d4d0c8;box-shadow:inset 1px 1px #fff,inset -1px -1px #404040,inset -2px -2px #808080"><div class="t" style="left:5px;top:3px">5</div></div>
<div class="a" style="left:0;top:90px;width:22px;height:18px;background:#d4d0c8;box-shadow:inset 1px 1px #fff,inset -1px -1px #404040,inset -2px -2px #808080"><div class="t" style="left:5px;top:3px">6</div></div>
<div class="a" style="left:0;top:108px;width:22px;height:18px;background:#d4d0c8;box-shadow:inset 1px 1px #fff,inset -1px -1px #404040,inset -2px -2px #808080"><div class="t" style="left:5px;top:3px">7</div></div>
<div class="a" style="left:0;top:126px;width:22px;height:18px;background:#d4d0c8;box-shadow:inset 1px 1px #fff,inset -1px -1px #404040,inset -2px -2px #808080"><div class="t" style="left:5px;top:3px">8</div></div>
<div class="a" style="left:0;top:144px;width:22px;height:18px;background:#d4d0c8;box-shadow:inset 1px 1px #fff,inset -1px -1px #404040,inset -2px -2px #808080"><div class="t" style="left:5px;top:3px">9</div></div>
<div class="a" style="left:0;top:162px;width:22px;height:18px;background:#d4d0c8;box-shadow:inset 1px 1px #fff,inset -1px -1px #404040,inset -2px -2px #808080"><div class="t" style="left:5px;top:3px">10</div></div>
</div>
<div class="a" style="left:905px;top:405px;width:16px;height:197px;background-image:conic-gradient(#fff 25%,#d4d0c8 0 50%,#fff 0 75%,#d4d0c8 0);background-size:2px 2px"></div>
<div class="btn" style="left:905px;top:405px;width:16px;height:16px;box-shadow:inset -1px -1px #404040,inset 1px 1px #d4d0c8,inset -2px -2px #808080,inset 2px 2px #fff"></div>
<svg class="a" style="left:909px;top:411px" width="8" height="5"><path d="M3.5 0l3.5 4H0z" fill="#000"/></svg>
<div class="btn" style="left:905px;top:421px;width:16px;height:37px;box-shadow:inset -1px -1px #404040,inset 1px 1px #d4d0c8,inset -2px -2px #808080,inset 2px 2px #fff"></div>
<div class="btn" style="left:905px;top:586px;width:16px;height:16px;box-shadow:inset -1px -1px #404040,inset 1px 1px #d4d0c8,inset -2px -2px #808080,inset 2px 2px #fff"></div>
<svg class="a" style="left:909px;top:592px" width="8" height="5"><path d="M0 0h7l-3.5 4z" fill="#000"/></svg>
<!-- status -->
<div class="a" style="left:4px;top:606px;width:299px;height:17px;box-shadow:inset 1px 1px #808080,inset -1px -1px #fff"></div>
<div class="a" style="left:305px;top:606px;width:299px;height:17px;box-shadow:inset 1px 1px #808080,inset -1px -1px #fff"></div>
<div class="a" style="left:606px;top:606px;width:299px;height:17px;box-shadow:inset 1px 1px #808080,inset -1px -1px #fff"></div>
<div class="t" style="left:608px;top:609px">PI: Zoneamento_02_02_11</div>
<svg class="a" style="left:909px;top:610px" width="13" height="13" shape-rendering="crispEdges">
<path d="M11 0h1v1h-1zM10 1h1v1h-1zM9 2h1v1H9zM8 3h1v1H8zM7 4h1v1H7zM6 5h1v1H6zM5 6h1v1H5zM4 7h1v1H4zM3 8h1v1H3zM2 9h1v1H2zM1 10h1v1H1zM0 11h1v1H0z" fill="#808080"/>
<path d="M12 0v1h-1v1h-1v1H9v1H8v1H7v1H6v1H5v1H4v1H3v1H2v1H1v1h1v-1h1v-1h1V9h1V8h1V7h1V6h1V5h1V4h1V3h1V2h1V1z" fill="#fff" opacity="0"/>
<path d="M11 4h1v1h-1zM10 5h1v1h-1zM9 6h1v1H9zM8 7h1v1H8zM7 8h1v1H7zM6 9h1v1H6zM5 10h1v1H5zM4 11h1v1H4z" fill="#808080"/>
<path d="M11 8h1v1h-1zM10 9h1v1h-1zM9 10h1v1H9zM8 11h1v1H8z" fill="#808080"/>
<path d="M12 1h1v1h-1zM11 2h1v1h-1zM10 3h1v1h-1zM9 4h1v1H9zM8 5h1v1H8zM7 6h1v1H7zM6 7h1v1H6zM5 8h1v1H5zM4 9h1v1H4zM3 10h1v1H3zM2 11h1v1H2z M12 5h1v1h-1zM11 6h1v1h-1zM10 7h1v1h-1zM9 8h1v1H9zM8 9h1v1H8zM7 10h1v1H7zM6 11h1v1H6z M12 9h1v1h-1zM11 10h1v1h-1zM10 11h1v1h-1z" fill="#fff"/>
</svg>
<svg class="a" style="left:113px;top:393px" width="13" height="20" shape-rendering="crispEdges"><path d="M0 0h1v1h-1zM0 1h1v1h-1zM1 1h1v1h-1zM0 2h1v1h-1zM2 2h1v1h-1zM0 3h1v1h-1zM3 3h1v1h-1zM0 4h1v1h-1zM4 4h1v1h-1zM0 5h1v1h-1zM5 5h1v1h-1zM0 6h1v1h-1zM6 6h1v1h-1zM0 7h1v1h-1zM7 7h1v1h-1zM0 8h1v1h-1zM8 8h1v1h-1zM0 9h1v1h-1zM9 9h1v1h-1zM0 10h1v1h-1zM10 10h1v1h-1zM0 11h1v1h-1zM7 11h1v1h-1zM8 11h1v1h-1zM9 11h1v1h-1zM10 11h1v1h-1zM11 11h1v1h-1zM0 12h1v1h-1zM6 12h1v1h-1zM0 13h1v1h-1zM3 13h1v1h-1zM4 13h1v1h-1zM7 13h1v1h-1zM0 14h1v1h-1zM2 14h1v1h-1zM4 14h1v1h-1zM7 14h1v1h-1zM0 15h1v1h-1zM1 15h1v1h-1zM5 15h1v1h-1zM8 15h1v1h-1zM0 16h1v1h-1zM5 16h1v1h-1zM8 16h1v1h-1zM6 17h1v1h-1zM9 17h1v1h-1zM6 18h1v1h-1zM9 18h1v1h-1zM7 19h1v1h-1zM8 19h1v1h-1z" fill="#000"/><path d="M1 2h1v1h-1zM1 3h1v1h-1zM2 3h1v1h-1zM1 4h1v1h-1zM2 4h1v1h-1zM3 4h1v1h-1zM1 5h1v1h-1zM2 5h1v1h-1zM3 5h1v1h-1zM4 5h1v1h-1zM1 6h1v1h-1zM2 6h1v1h-1zM3 6h1v1h-1zM4 6h1v1h-1zM5 6h1v1h-1zM1 7h1v1h-1zM2 7h1v1h-1zM3 7h1v1h-1zM4 7h1v1h-1zM5 7h1v1h-1zM6 7h1v1h-1zM1 8h1v1h-1zM2 8h1v1h-1zM3 8h1v1h-1zM4 8h1v1h-1zM5 8h1v1h-1zM6 8h1v1h-1zM7 8h1v1h-1zM1 9h1v1h-1zM2 9h1v1h-1zM3 9h1v1h-1zM4 9h1v1h-1zM5 9h1v1h-1zM6 9h1v1h-1zM7 9h1v1h-1zM8 9h1v1h-1zM1 10h1v1h-1zM2 10h1v1h-1zM3 10h1v1h-1zM4 10h1v1h-1zM5 10h1v1h-1zM6 10h1v1h-1zM7 10h1v1h-1zM8 10h1v1h-1zM9 10h1v1h-1zM1 11h1v1h-1zM2 11h1v1h-1zM3 11h1v1h-1zM4 11h1v1h-1zM5 11h1v1h-1zM6 11h1v1h-1zM1 12h1v1h-1zM2 12h1v1h-1zM3 12h1v1h-1zM4 12h1v1h-1zM5 12h1v1h-1zM1 13h1v1h-1zM2 13h1v1h-1zM5 13h1v1h-1zM6 13h1v1h-1zM1 14h1v1h-1zM5 14h1v1h-1zM6 14h1v1h-1zM6 15h1v1h-1zM7 15h1v1h-1zM6 16h1v1h-1zM7 16h1v1h-1zM7 17h1v1h-1zM8 17h1v1h-1zM7 18h1v1h-1zM8 18h1v1h-1z" fill="#fff"/></svg>
</body></html>
